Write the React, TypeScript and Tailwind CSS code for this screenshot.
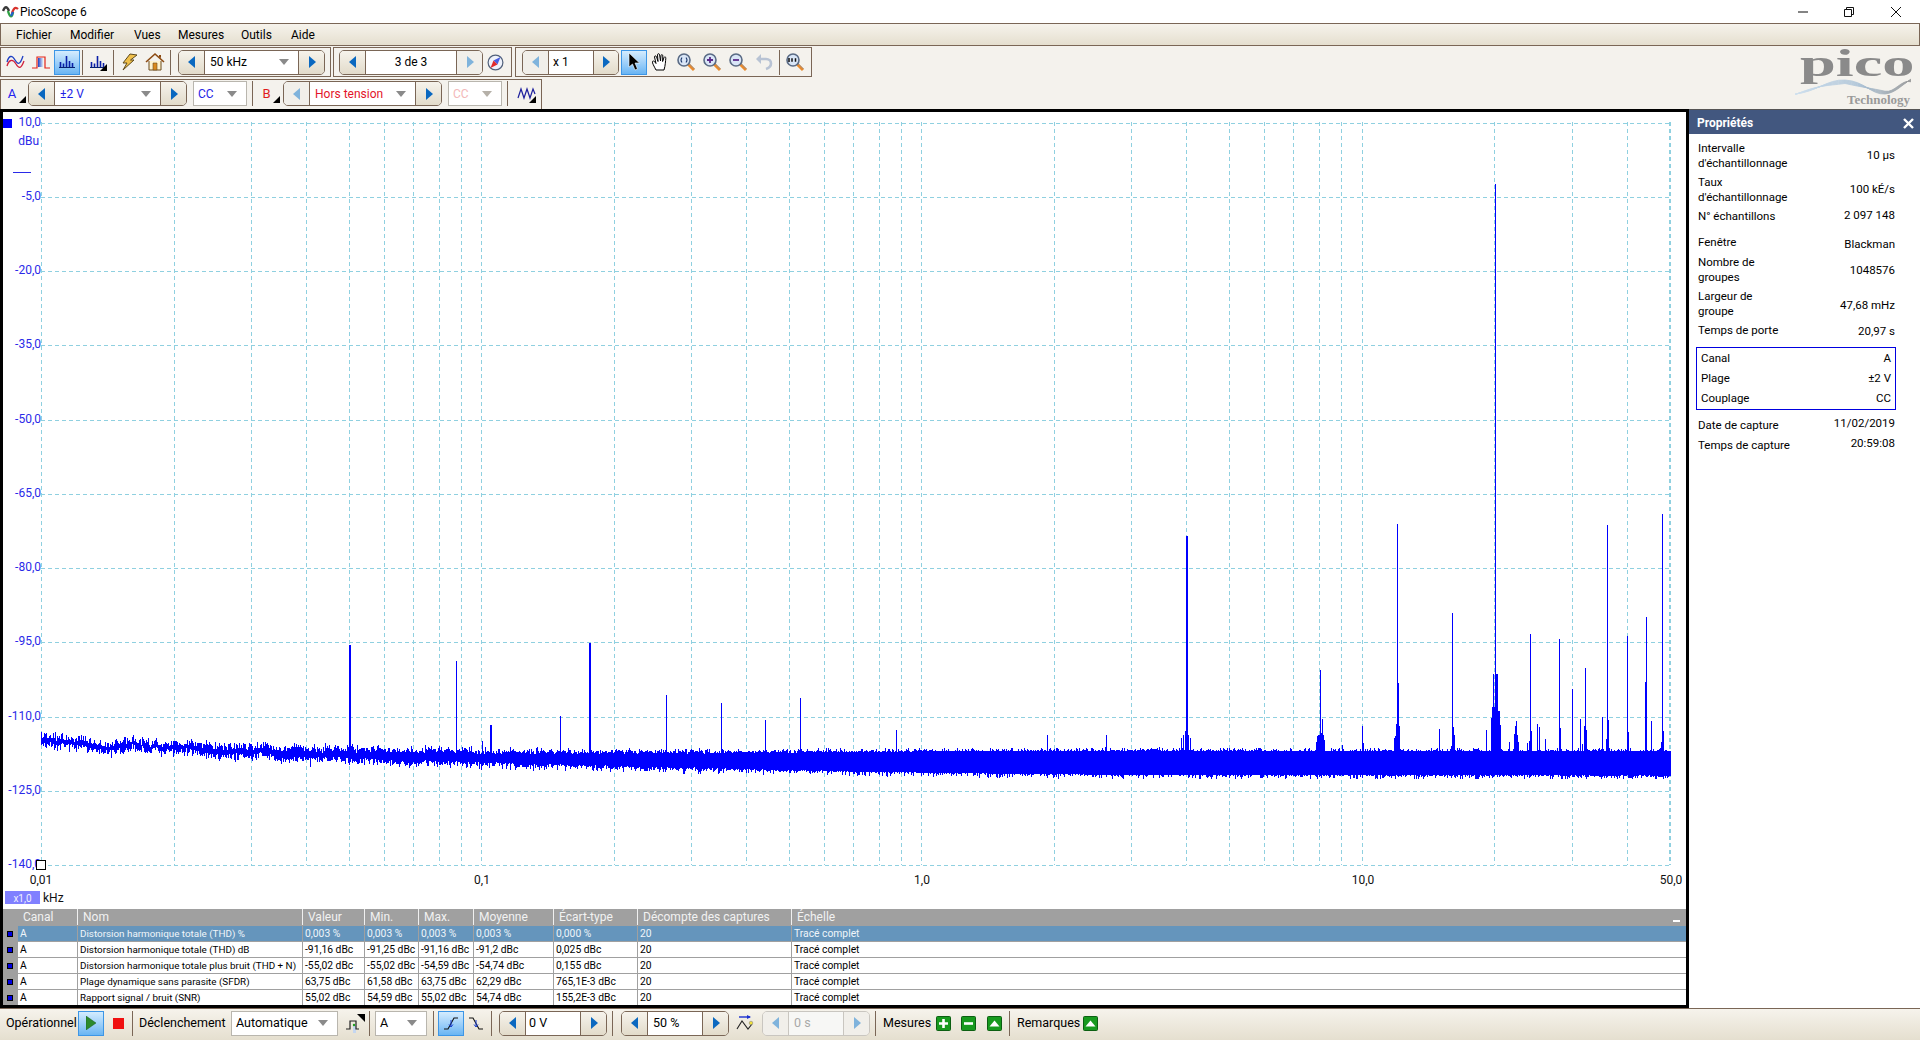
import type { ReactNode } from "react";

// ---------- chart data ----------

function mulberry(seed: number) {
  return () => {
    seed |= 0;
    seed = (seed + 0x6d2b79f5) | 0;
    let t = Math.imul(seed ^ (seed >>> 15), 1 | seed);
    t = (t + Math.imul(t ^ (t >>> 7), 61 | t)) ^ t;
    return ((t ^ (t >>> 14)) >>> 0) / 4294967296;
  };
}

const X0 = 41;
const X1 = 1670;
const DECADE = 440.2;

const spikes: [number, number][] = [
  [349, 645], [350, 645], [456, 661], [482, 741], [490, 725], [491, 725], [560, 716], [589, 643], [590, 643],
  [666, 695], [721, 703], [765, 720], [800, 698], [896, 730], [1047, 735], [1106, 735],
  [1181, 738], [1183, 735], [1185, 731], [1186, 536], [1187, 536], [1188, 735], [1190, 738],
  [1316, 742], [1317, 736], [1318, 735], [1319, 735], [1320, 670], [1321, 733], [1322, 719], [1323, 735], [1324, 740],
  [1342, 745], [1362, 726], [1363, 743],
  [1394, 738], [1395, 736], [1396, 724], [1397, 524], [1398, 683], [1399, 726],
  [1439, 729], [1451, 746], [1452, 613], [1453, 727], [1454, 735],
  [1486, 730], [1491, 718], [1492, 707], [1493, 674], [1494, 707], [1495, 184], [1496, 674], [1497, 674], [1498, 711], [1499, 711], [1500, 725],
  [1509, 742], [1514, 734], [1515, 726], [1516, 721], [1517, 735], [1518, 742],
  [1527, 743], [1529, 741], [1530, 634], [1531, 731], [1537, 724], [1539, 727], [1545, 739],
  [1559, 639], [1560, 728], [1572, 689], [1580, 719], [1582, 744], [1584, 726], [1585, 668], [1586, 730],
  [1602, 717], [1606, 739], [1607, 525], [1608, 720], [1627, 636], [1628, 732],
  [1645, 682], [1646, 617], [1651, 721], [1661, 742], [1662, 514], [1663, 731],
];

function buildTrace() {
  const rnd = mulberry(1234);
  let d = "";
  let wander = 0;
  for (let x = X0; x <= X1; x++) {
    const t = (x - X0) / (X1 - X0);
    wander = wander * 0.9 + (rnd() - 0.5) * 2.6;
    const c = 741 + 22.5 * (1 - Math.exp(-t * 5)) + wander * Math.max(0, 1 - t * 3);
    const amp = 6 + 7.5 * Math.pow(Math.min(1, t * 1.5), 1.1);
    const fill = Math.min(1, t * 1.8);
    const r1 = fill * 0.9 + (1 - fill) * rnd();
    const r2 = fill * 0.9 + (1 - fill) * rnd();
    const spread = 4 - 1 * t;
    const top = c - amp * r1 - Math.pow(rnd(), 3) * spread;
    const bot = c + amp * r2 + Math.pow(rnd(), 3) * spread * 1.3;
    d += `M${x + 0.5} ${top.toFixed(0)}V${bot.toFixed(0)}`;
  }
  for (const [x, top] of spikes) d += `M${x + 0.5} ${top}V760`;
  return d;
}

const trace = buildTrace();

const yLabels = ["10,0", "-5,0", "-20,0", "-35,0", "-50,0", "-65,0", "-80,0", "-95,0", "-110,0", "-125,0", "-140,0"];

const vGrid: number[] = [];
for (let dec = 0; dec < 4; dec++) {
  for (let m = 1; m <= 9; m++) {
    const x = X0 + (dec + Math.log10(m)) * DECADE;
    if (x <= X1 + 1) vGrid.push(Math.round(x));
  }
}

// ---------- small parts ----------

function Tri({ dir, off, color }: { dir: "l" | "r"; off?: boolean; color?: string }) {
  const fill = color ?? (off ? "#7fb3dc" : "#0a68c0");
  return (
    <svg width="8" height="12" viewBox="0 0 8 12">
      <path d={dir === "l" ? "M7 0V12L0 6Z" : "M1 0V12L8 6Z"} fill={fill} />
    </svg>
  );
}

function Nav({ mid, sl = 26, sr = 26, leftOff, rightOff, allOff, children }: {
  mid: number; sl?: number; sr?: number; leftOff?: boolean; rightOff?: boolean; allOff?: boolean; children: ReactNode;
}) {
  const on = "bg-linear-to-b from-[#f6f3ec] to-[#e2dbca]";
  const off = "bg-[#f1efea]";
  return (
    <div className={`flex h-[25px] shrink-0 overflow-hidden rounded-[5px] border ${allOff ? "border-[#c9c6c0]" : "border-[#7a6656]"}`}>
      <div style={{ width: sl }} className={`flex items-center justify-center ${leftOff || allOff ? off : on}`}>
        <Tri dir="l" off={leftOff || allOff} />
      </div>
      <div style={{ width: mid }} className={`flex items-center border-x ${allOff ? "border-[#c9c6c0] bg-[#f7f7f5] text-[#a9a9a9]" : "border-[#7a6656] bg-white"}`}>
        {children}
      </div>
      <div style={{ width: sr }} className={`flex items-center justify-center ${rightOff || allOff ? off : on}`}>
        <Tri dir="r" off={rightOff || allOff} />
      </div>
    </div>
  );
}

function Combo({ w, children, off, arrow = "#8a8a8a" }: { w: number; children: ReactNode; off?: boolean; arrow?: string }) {
  return (
    <div style={{ width: w }} className={`flex h-[25px] shrink-0 items-center justify-between border border-[#b9b6ae] bg-white pl-1 pr-[9px] ${off ? "text-[#f3b9b9]" : ""}`}>
      <span>{children}</span>
      <svg width="10" height="6" viewBox="0 0 10 6"><path d="M0 0H10L5 6Z" fill={off ? "#b5b0a8" : arrow} /></svg>
    </div>
  );
}

function Btn({ active, w = 26, children }: { active?: boolean; w?: number; children: ReactNode }) {
  return (
    <div style={{ width: w }} className={`flex h-[25px] shrink-0 items-center justify-center ${active ? "border border-[#3d96e6] bg-linear-to-b from-[#d4ecfe] to-[#69b5f3]" : ""}`}>
      {children}
    </div>
  );
}

function Sep({ className = "" }: { className?: string }) {
  return <div className={`h-[25px] w-[1px] shrink-0 bg-[#7a6656] ${className}`} />;
}

function Corner() {
  return <path d="M19 12V19H12Z" fill="#000" />;
}

const SineIcon = () => (
  <svg width="19" height="14" viewBox="0 0 19 14" fill="none">
    <path d="M1 11C3 4 7 4 10 9S15 14 18 6" stroke="#d0203c" strokeWidth="1.3" />
    <path d="M1 7C3 0 6 0 9 5S14 10 17 1" stroke="#1d3fc4" strokeWidth="1.3" />
  </svg>
);
const SquareIcon = () => (
  <svg width="18" height="13" viewBox="0 0 18 13" fill="none">
    <defs>
      <linearGradient id="sq" x1="0" x2="1" y1="0" y2="0">
        <stop offset="0" stopColor="#1d3fc4" />
        <stop offset="1" stopColor="#dbe7f7" />
      </linearGradient>
    </defs>
    <rect x="6" y="2" width="5" height="9" fill="url(#sq)" />
    <path d="M0 12H5V1H13V12H18" stroke="#e2231a" strokeWidth="1.2" />
  </svg>
);
const BarsIcon = ({ corner }: { corner?: boolean }) => (
  <svg width="20" height="20" viewBox="0 0 20 20" fill="none">
    <path d="M2 15.5H18" stroke="#06206f" />
    <path d="M3.5 15V10M6.5 15V11.5M9.5 15V4M12.5 15V9M15.5 15V11" stroke="#0a1fa8" strokeWidth="1.6" />
    {corner && <Corner />}
  </svg>
);
const BoltIcon = () => (
  <svg width="20" height="20" viewBox="0 0 20 20">
    <path d="M11 2L18 3L11.5 8L15 8L4 18L8 11L4 11Z" fill="#f0c04a" stroke="#5e4a1e" strokeWidth="1" />
  </svg>
);
const HomeIcon = () => (
  <svg width="20" height="20" viewBox="0 0 20 20">
    <path d="M4 9V18H16V9" fill="#fdf3d0" stroke="#6b4a1c" />
    <path d="M1 10L10 2L19 10" fill="none" stroke="#8c4a12" strokeWidth="1.6" />
    <path d="M8 11H12V18H8Z" fill="#d98a1f" stroke="#6b4a1c" strokeWidth="0.6" />
    <path d="M14 3H16V6L14 5Z" fill="#8c4a12" />
  </svg>
);
const CompassIcon = () => (
  <svg width="17" height="17" viewBox="0 0 17 17">
    <circle cx="8.5" cy="8.5" r="7.4" fill="#eef2fb" stroke="#50607a" strokeWidth="1.2" />
    <path d="M13.5 3L6.5 6.5L10.5 10.5Z" fill="#4a5fe0" />
    <path d="M3.5 14L10.5 10.5L6.5 6.5Z" fill="#e02b2b" />
  </svg>
);
const ArrowIcon = () => (
  <svg width="14" height="20" viewBox="0 0 14 20">
    <path d="M2 1V15L5.5 12L8 18L10.5 17L8 11H12.5Z" fill="#000" stroke="#fff" strokeWidth="0.6" />
  </svg>
);
const HandIcon = () => (
  <svg width="18" height="20" viewBox="0 0 18 20" fill="#fff" stroke="#000" strokeWidth="1">
    <path d="M5 18C3 14 1 11 1.5 9.5C2 8.5 3.5 9 5 11.5L3.5 5C3.5 3.5 5.2 3.5 5.6 5L7 9.5L6.5 2.8C6.6 1.3 8.4 1.3 8.6 2.8L9.5 9L10 3.5C10.2 2.2 11.8 2.4 11.8 3.8L11.6 9.5L13 5.5C13.5 4.3 15 4.8 14.8 6.2C14.5 9 14.5 13 13 18Z" />
  </svg>
);
function Lens({ kind }: { kind: "fit" | "plus" | "minus" | "hundred" }) {
  return (
    <svg width="20" height="20" viewBox="0 0 20 20" fill="none">
      <path d="M12 12L18 18" stroke="#e98a2c" strokeWidth="3" />
      <path d="M12.5 11L18.5 17" stroke="#8a8f99" strokeWidth="0.8" />
      <circle cx="8" cy="8" r="6" fill="#d9e6f7" stroke="#5a6b85" strokeWidth="1.6" />
      {kind === "plus" && <path d="M5 8H11M8 5V11" stroke="#5b2a8a" strokeWidth="1.8" />}
      {kind === "minus" && <path d="M5 8H11" stroke="#5b2a8a" strokeWidth="1.8" />}
      {kind === "fit" && <path d="M6 5.5C4.8 7 4.8 9 6 10.5M10 5.5C11.2 7 11.2 9 10 10.5" stroke="#1e3a6e" strokeWidth="1.1" />}
      {kind === "hundred" && <path d="M4 6V10M7 6.3V9.7M10.5 6.3V9.7" stroke="#111" strokeWidth="1.5" />}
    </svg>
  );
}
const UndoIcon = () => (
  <svg width="18" height="18" viewBox="0 0 18 18" fill="none">
    <path d="M5 6H11C14 6 16 8 16 10.5C16 13 14 15 11 16" stroke="#b8c3d4" strokeWidth="2.6" />
    <path d="M1 6L6 1V11Z" fill="#b8c3d4" />
  </svg>
);
const ZigIcon = () => (
  <svg width="20" height="20" viewBox="0 0 20 20" fill="none">
    <path d="M1 14L4 5L7 14L10 5L13 14L16 5L18 10" stroke="#1d1f9c" strokeWidth="1.2" />
    <Corner />
  </svg>
);
const GreenBtn = ({ kind }: { kind: "plus" | "minus" | "up" }) => (
  <svg width="15" height="15" viewBox="0 0 15 15" className="shrink-0">
    <rect x="0.5" y="0.5" width="14" height="14" rx="1" fill="#179a1e" stroke="#0c5f12" />
    {kind === "plus" && <path d="M3 7.5H12M7.5 3V12" stroke="#fff" strokeWidth="2.6" />}
    {kind === "minus" && <path d="M3 7.5H12" stroke="#fff" strokeWidth="2.6" />}
    {kind === "up" && <path d="M2.5 10.5H12.5L7.5 4.5Z" fill="#fff" />}
  </svg>
);
const TriggerIcon = () => (
  <svg width="20" height="20" viewBox="0 0 20 20" fill="none">
    <path d="M8 12H11V20H8Z" fill="#c4d6f0" />
    <path d="M1 16H5V8H11V16H14" stroke="#222" strokeWidth="1.2" />
    <circle cx="9" cy="12" r="1.2" fill="#1ea01e" />
    <path d="M12 1H20V9Z" fill="#000" />
  </svg>
);
const EdgeIcon = ({ up }: { up?: boolean }) => (
  <svg width="16" height="16" viewBox="0 0 16 16" fill="none">
    {up ? <path d="M1 14H5L11 3H15" stroke="#111" strokeWidth="1.1" /> : <path d="M1 3H5L11 14H15" stroke="#111" strokeWidth="1.1" />}
    <path d="M8 5V12M6 9.5L8 12L10 9.5" stroke="#1a3fd0" strokeWidth="1" />
  </svg>
);
const PreTrigIcon = () => (
  <svg width="18" height="18" viewBox="0 0 18 18" fill="none">
    <path d="M1 15L6 7L12 15L16 10" stroke="#222" strokeWidth="1.1" />
    <path d="M3 3H14" stroke="#1a2fd0" strokeWidth="1.4" />
    <path d="M11 1L15 3L11 5Z" fill="#1a2fd0" />
    <circle cx="15" cy="9" r="1.8" fill="#f2e23a" stroke="#777" strokeWidth="0.5" />
  </svg>
);
const AppIcon = () => (
  <svg width="17" height="17" viewBox="0 0 17 17" fill="none">
    <path d="M1 8C3 3 5 3 7 8" stroke="#3a3a3a" strokeWidth="2.4" />
    <path d="M6 8C8 15 10 15 11 9" stroke="#2ea043" strokeWidth="2.4" />
    <path d="M10 10C12 4 14 4 16 6" stroke="#d8322c" strokeWidth="2.2" />
    <path d="M9 13L11 9" stroke="#2160cc" strokeWidth="2.2" />
  </svg>
);

function Logo() {
  const waves = [0, 1, 2, 3, 4, 5, 6, 7];
  return (
    <div className="relative h-[63px] w-[125px] shrink-0">
      <div className="absolute left-[5px] top-0 origin-left font-['Liberation_Serif',serif] text-[37px] font-bold leading-[36px] text-[#8a8a8a] [transform:scaleX(1.74)]">pico</div>
      <svg className="absolute left-0 top-[32px]" width="118" height="18" viewBox="0 0 118 18" fill="none">
        <defs>
          <linearGradient id="wv" x1="0" x2="1" y1="0" y2="0">
            <stop offset="0" stopColor="#cfe0ee" />
            <stop offset="0.55" stopColor="#a9c1d6" />
            <stop offset="1" stopColor="#9b9b9b" />
          </linearGradient>
        </defs>
        {waves.map((i) => (
          <path key={i} d={`M0 ${16 + i * 0.1}C22 ${14 - i} 32 ${1 + i} 50 ${2 + i * 0.5}C70 ${3 + i} 76 ${17 - i} 90 ${16 - i * 0.4}C100 ${15} 106 ${8 - i} 116 ${1 + i * 0.4}`} stroke="url(#wv)" strokeWidth="0.7" />
        ))}
      </svg>
      <div className="absolute left-[52px] top-[46px] font-['Liberation_Serif',serif] text-[13px] font-bold leading-[16px] text-[#9a9a9a]">Technology</div>
    </div>
  );
}

// ---------- table / properties ----------

const cols = ["Canal", "Nom", "Valeur", "Min.", "Max.", "Moyenne", "Écart-type", "Décompte des captures", "Échelle"];
const rows = [
  ["A", "Distorsion harmonique totale (THD) %", "0,003 %", "0,003 %", "0,003 %", "0,003 %", "0,000 %", "20", "Tracé complet"],
  ["A", "Distorsion harmonique totale (THD) dB", "-91,16 dBc", "-91,25 dBc", "-91,16 dBc", "-91,2 dBc", "0,025 dBc", "20", "Tracé complet"],
  ["A", "Distorsion harmonique totale plus bruit (THD + N)", "-55,02 dBc", "-55,02 dBc", "-54,59 dBc", "-54,74 dBc", "0,155 dBc", "20", "Tracé complet"],
  ["A", "Plage dynamique sans parasite (SFDR)", "63,75 dBc", "61,58 dBc", "63,75 dBc", "62,29 dBc", "765,1E-3 dBc", "20", "Tracé complet"],
  ["A", "Rapport signal / bruit (SNR)", "55,02 dBc", "54,59 dBc", "55,02 dBc", "54,74 dBc", "155,2E-3 dBc", "20", "Tracé complet"],
];
const gridCols = "grid grid-cols-[15px_59px_225px_62px_54px_55px_80px_84px_154px_1fr]";

function PropRow({ h, label, value, vc = "", lc = "" }: { h: number; label: ReactNode; value: string; vc?: string; lc?: string }) {
  return (
    <div style={{ height: h }} className="flex items-center justify-between pl-[9px] pr-[25px]">
      <div className={`leading-[15px] ${lc}`}>{label}</div>
      <div className={vc}>{value}</div>
    </div>
  );
}

function Combo0({ color, children }: { color: string; children: ReactNode }) {
  return (
    <div className="flex w-full items-center justify-between pl-[5px] pr-[9px]">
      <span className={color}>{children}</span>
      <svg width="10" height="6" viewBox="0 0 10 6"><path d="M0 0H10L5 6Z" fill="#8a8a8a" /></svg>
    </div>
  );
}

export default function App() {
  return (
    <div className="flex h-[1040px] w-[1920px] flex-col overflow-hidden bg-[#f4f2ed] font-['Roboto',sans-serif] text-[12px] text-black">
      {/* title bar */}
      <div className="flex h-[23px] shrink-0 items-center bg-white pl-[2px]">
        <AppIcon />
        <span className="ml-[1px] text-[12px]">PicoScope 6</span>
        <div className="ml-auto flex items-center pr-[19px]">
          <svg width="10" height="10" viewBox="0 0 10 10" className="mr-[36px]"><path d="M0 5H10" stroke="#333" strokeWidth="1.2" /></svg>
          <svg width="10" height="10" viewBox="0 0 10 10" fill="none" className="mr-[37px]" stroke="#111"><path d="M0.5 2.5H7.5V9.5H0.5ZM2.5 2.5V0.5H9.5V7.5H7.5" /></svg>
          <svg width="10" height="10" viewBox="0 0 10 10" stroke="#111"><path d="M0 0L10 10M10 0L0 10" /></svg>
        </div>
      </div>

      {/* menu */}
      <div className="flex h-[23px] shrink-0 items-center border border-[#7a6656] bg-linear-to-b from-[#f6f3ec] to-[#e5dfcf] text-[12px]">
        <span className="ml-[15px] w-[54px]">Fichier</span>
        <span className="w-[64px]">Modifier</span>
        <span className="w-[44px]">Vues</span>
        <span className="w-[63px]">Mesures</span>
        <span className="w-[50px]">Outils</span>
        <span>Aide</span>
      </div>

      {/* toolbars + logo */}
      <div className="flex h-[63px] shrink-0 justify-between">
        <div>
          <div className="mt-[1px] flex h-[30px]">
            <div className="flex w-[331px] items-center border border-[#7a6656] pl-[1px]">
              <Btn><SineIcon /></Btn>
              <Btn><SquareIcon /></Btn>
              <Btn active><BarsIcon /></Btn>
              <Sep className="mx-[2px]" />
              <Btn><BarsIcon corner /></Btn>
              <Sep className="mx-[2px]" />
              <Btn><BoltIcon /></Btn>
              <Btn><HomeIcon /></Btn>
              <Sep className="mx-[2px]" />
              <div className="ml-[5px]">
                <Nav mid={95} sl={25} sr={25}>
                  <div className="flex w-full items-center justify-between pl-[5px] pr-[9px]">
                    <span>50 kHz</span>
                    <svg width="10" height="6" viewBox="0 0 10 6"><path d="M0 0H10L5 6Z" fill="#8a8a8a" /></svg>
                  </div>
                </Nav>
              </div>
            </div>
            <div className="ml-[2px] flex w-[179px] items-center border border-[#7a6656] pl-[5px]">
              <Nav mid={92} sl={25} sr={25} rightOff>
                <span className="w-full text-center">3 de 3</span>
              </Nav>
              <Btn w={24}><CompassIcon /></Btn>
            </div>
            <div className="ml-[3px] flex w-[297px] items-center border border-[#7a6656] pl-[6px]">
              <Nav mid={46} sl={25} sr={24} leftOff>
                <span className="pl-[4px]">x 1</span>
              </Nav>
              <div className="ml-[2px] flex items-center">
                <Btn active><ArrowIcon /></Btn>
                <Btn><HandIcon /></Btn>
                <Btn><Lens kind="fit" /></Btn>
                <Btn><Lens kind="plus" /></Btn>
                <Btn><Lens kind="minus" /></Btn>
                <Btn><UndoIcon /></Btn>
                <Sep className="mx-[2px]" />
                <Btn><Lens kind="hundred" /></Btn>
              </div>
            </div>
          </div>
          <div className="mt-[2px] flex h-[30px] w-[542px] items-center border border-b-0 border-[#7a6656] pb-[2px] pl-[2px]">
            <div className="relative flex h-[25px] w-[25px] items-center justify-center pr-[6px] text-[13px] text-[#2323f0]">
              A
              <svg width="7" height="7" viewBox="0 0 7 7" className="absolute bottom-[3px] right-[1px]"><path d="M7 0V7H0Z" /></svg>
            </div>
            <div className="ml-[1px]"><Nav mid={107} sl={25} sr={25}><Combo0 color="text-[#1e1ee6]">±2 V</Combo0></Nav></div>
            <div className="ml-[6px] text-[#1e1ee6]"><Combo w={54}>CC</Combo></div>
            <Sep className="mx-[5px]" />
            <div className="relative ml-[-1px] flex h-[25px] w-[26px] items-center justify-center pr-[6px] text-[13px] text-[#e01b1b]">
              B
              <svg width="7" height="7" viewBox="0 0 7 7" className="absolute bottom-[3px] right-[2px]"><path d="M7 0V7H0Z" /></svg>
            </div>
            <div className="ml-[1px]"><Nav mid={107} sl={25} sr={25} leftOff><Combo0 color="text-[#e3142a]">Hors tension</Combo0></Nav></div>
            <div className="ml-[6px]"><Combo w={54} off>CC</Combo></div>
            <Sep className="mx-[5px]" />
            <Btn w={28}><ZigIcon /></Btn>
          </div>
        </div>
        <Logo />
      </div>

      {/* main */}
      <div className="flex h-[899px] shrink-0">
        <div className="flex w-[1689px] shrink-0 flex-col border-[3px] border-black bg-white">
          <svg width="1683" height="797" viewBox="3 112 1683 797" className="block shrink-0" style={{ shapeRendering: "crispEdges" }}>
            <g stroke="#8fd0e0" strokeWidth="1" strokeDasharray="4 3">
              {yLabels.map((_, i) => {
                const y = Math.round(122.5 + i * 74.25) + 0.5;
                return <path key={i} d={`M${X0} ${y}H${X1}`} />;
              })}
              {vGrid.map((x) => (
                <path key={x} d={`M${x + 0.5} 122V865`} />
              ))}
              <path d={`M${X1 + 0.5} 122V865`} />
            </g>
            <path d={trace} stroke="#0000ff" strokeWidth="1" fill="none" />
            <rect x="3" y="119" width="9" height="9" fill="#0000ff" />
            <g fontSize="12" fill="#2a2ae8" textAnchor="end" style={{ shapeRendering: "auto" }}>
              {yLabels.map((l, i) => (
                <text key={l} x="41" y={Math.round(122.5 + i * 74.25) + 3}>{l}</text>
              ))}
              <text x="39" y="145">dBu</text>
            </g>
            <path d="M13 172.5H31" stroke="#2a2ae8" />
            <rect x="36.5" y="860.5" width="9" height="9" fill="#fff" stroke="#000" />
            <g fontSize="12" fill="#111" textAnchor="middle" style={{ shapeRendering: "auto" }}>
              <text x="41" y="884">0,01</text>
              <text x="482" y="884">0,1</text>
              <text x="922" y="884">1,0</text>
              <text x="1363" y="884">10,0</text>
              <text x="1671" y="884">50,0</text>
            </g>
            <rect x="5" y="891" width="35" height="13" fill="#8080ff" />
            <text x="22.5" y="901.5" fontSize="10" fill="#f0f0ff" textAnchor="middle">x1,0</text>
            <text x="43" y="902" fontSize="12" fill="#111">kHz</text>
          </svg>

          {/* measurements table */}
          <div className="relative flex h-[96px] flex-col bg-[#a0a0a0]">
            <div className={`${gridCols} h-[16px] text-[12px] leading-[16px] text-[#f2f2f2]`}>
              <div />
              {cols.map((c, i) => (
                <div key={c} className={`truncate pl-[5px] ${i > 0 ? "border-l border-[#f0f0f0]" : ""}`}>{c}</div>
              ))}
            </div>
            {rows.map((r, ri) => (
              <div key={r[1]} className={`${gridCols} h-[16px] border-t border-[#a0a0a0] text-[10.3px] leading-[15px] ${ri === 0 ? "text-[#f0f5fa]" : ""}`}>
                <div className="flex items-center justify-center bg-[#a0a0a0] pr-[1px]">
                  <div className="h-[6px] w-[6px] border border-black bg-[#0000e0]" />
                </div>
                {r.map((v, i) => (
                  <div key={i} className={`overflow-hidden whitespace-nowrap pl-[2px] ${i === 1 ? "text-[9.85px]" : ""} ${ri === 0 ? "bg-[#6595bc]" : "bg-white"} ${i > 0 ? "border-l border-[#a0a0a0]" : ""}`}>{v}</div>
                ))}
              </div>
            ))}
            <div className="absolute right-[6px] top-[11px] h-[2px] w-[7px] bg-white" />
          </div>
        </div>

        {/* properties panel */}
        <div className="flex flex-1 flex-col border-t border-[#555] bg-white">
          <div className="flex h-[24px] shrink-0 items-center justify-between bg-[#42577f] pl-[8px] pr-[6px] pt-[2px] text-[12px] font-bold text-white">
            <span>Propriétés</span>
            <svg width="11" height="11" viewBox="0 0 11 11" stroke="#fff" strokeWidth="2.4"><path d="M1 1L10 10M10 1L1 10" /></svg>
          </div>
          <div className="pt-[5px] text-[11.5px]">
            <PropRow h={34} label={<>Intervalle<br />d'échantillonnage</>} value="10 µs" />
            <PropRow h={34} label={<>Taux<br />d'échantillonnage</>} value="100 kÉ/s" />
            <PropRow h={18} label="N° échantillons" value="2 097 148" />
            <div className="h-[7px]" />
            <PropRow h={21} label="Fenêtre" value="Blackman" vc="pt-[4px]" />
            <PropRow h={34} label={<>Nombre de<br />groupes</>} value="1048576" vc="pt-[2px]" />
            <PropRow h={34} label={<>Largeur de<br />groupe</>} value="47,68 mHz" vc="pt-[4px]" />
            <PropRow h={20} label="Temps de porte" value="20,97 s" vc="pt-[2px]" lc="pb-[2px]" />
            <div className="ml-[7px] mt-[6px] w-[200px] border border-[#0000e0] px-[4px] py-[1px]">
              <div className="flex h-[20px] items-center justify-between"><span>Canal</span><span>A</span></div>
              <div className="flex h-[20px] items-center justify-between"><span>Plage</span><span>±2 V</span></div>
              <div className="flex h-[19px] items-center justify-between"><span>Couplage</span><span>CC</span></div>
            </div>
            <div className="h-[5px]" />
            <PropRow h={20} label="Date de capture" value="11/02/2019" vc="pb-[2px]" />
            <PropRow h={20} label="Temps de capture" value="20:59:08" vc="pb-[2px]" />
          </div>
        </div>
      </div>

      {/* bottom bar */}
      <div className="flex h-[32px] shrink-0 items-center border-t border-[#7a6656] bg-linear-to-b from-[#f6f3ec] to-[#e5dfcf] pb-[3px] pl-[6px] text-[12.5px]">
        <span className="w-[72px]">Opérationnel</span>
        <Btn active>
          <svg width="10" height="14" viewBox="0 0 10 14"><path d="M0 0V14L10 7Z" fill="#2c8a2c" stroke="#1a5a1a" strokeWidth="0.5" /></svg>
        </Btn>
        <div className="ml-[9px] h-[11px] w-[11px] bg-[#f01010]" />
        <Sep className="ml-[8px] mr-[6px]" />
        <span className="w-[92px]">Déclenchement</span>
        <Combo w={107}>Automatique</Combo>
        <div className="ml-[7px] w-[24px]"><TriggerIcon /></div>
        <Sep className="mr-[5px]" />
        <Combo w={52}>A</Combo>
        <Sep className="ml-[6px] mr-[4px]" />
        <Btn active><EdgeIcon up /></Btn>
        <Btn w={24}><EdgeIcon /></Btn>
        <Sep className="ml-[3px] mr-[7px]" />
        <Nav mid={56} sl={25} sr={25}><span className="pl-[3px]">0 V</span></Nav>
        <Sep className="mx-[5px]" />
        <div className="ml-[3px]"><Nav mid={56} sl={25} sr={25}><span className="pl-[5px]">50 %</span></Nav></div>
        <div className="ml-[7px] w-[26px]"><PreTrigIcon /></div>
        <Nav mid={56} sl={25} sr={25} allOff><span className="pl-[5px]">0 s</span></Nav>
        <Sep className="mx-[5px]" />
        <span className="ml-[2px] w-[53px]">Mesures</span>
        <GreenBtn kind="plus" />
        <div className="ml-[10px]"><GreenBtn kind="minus" /></div>
        <div className="ml-[11px]"><GreenBtn kind="up" /></div>
        <Sep className="mx-[7px]" />
        <span className="w-[66px]">Remarques</span>
        <GreenBtn kind="up" />
      </div>
    </div>
  );
}
